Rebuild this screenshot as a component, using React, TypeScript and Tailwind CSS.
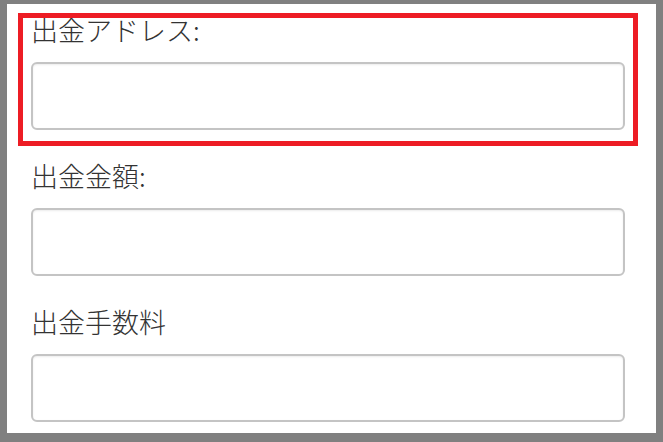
const fields = ["出金アドレス:", "出金金額:", "出金手数料"];

export default function App() {
  return (
    <div className="h-[442px] w-[663px] overflow-hidden bg-[#808080] pt-[4px] pl-[7px] pr-[7px] pb-[9px]">
      <div
        className="relative h-full w-full bg-white pl-[24px] pt-[8px]"
        style={{ fontFamily: '"Noto Sans CJK JP", "Noto Sans", sans-serif' }}
      >
        <div className="flex flex-col gap-[28px]">
          {fields.map((label) => (
            <div key={label} className="flex flex-col">
              <label className="text-[27px] font-light leading-[36px] text-[#333333]">
                {label}
              </label>
              <input
                type="text"
                className="mt-[14px] h-[68px] w-[594px] rounded-[6px] border-2 border-[#c4c4c4] bg-white shadow-[inset_0_1px_2px_rgba(0,0,0,0.08)] outline-none"
              />
            </div>
          ))}
        </div>

        {/* highlight around the address field */}
        <div className="pointer-events-none absolute left-[11px] top-[9px] h-[133px] w-[620px] border-[5px] border-[#ed1c24]" />
      </div>
    </div>
  );
}
